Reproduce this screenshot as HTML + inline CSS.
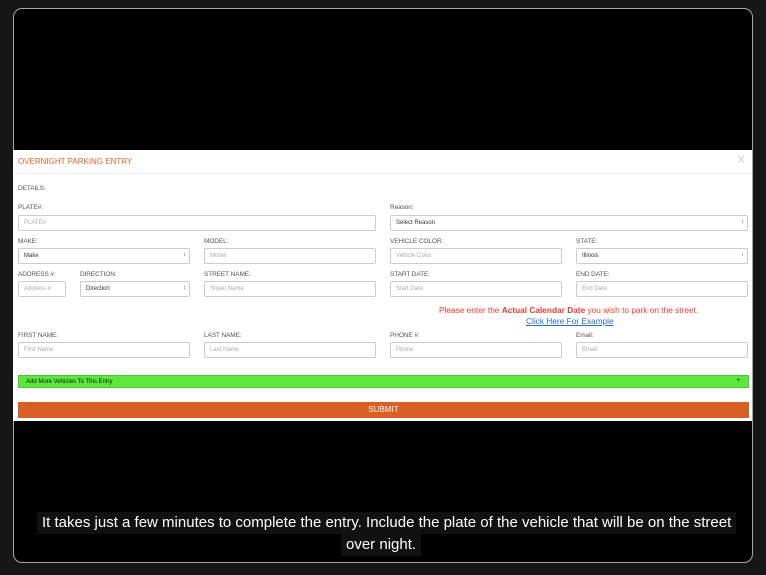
<!DOCTYPE html>
<html><head><meta charset="utf-8"><style>
*{box-sizing:border-box;margin:0;padding:0}
body{width:766px;height:575px;background:#161616;position:relative;overflow:hidden;font-family:"Liberation Sans",sans-serif}
.frame{position:absolute;left:13px;top:8px;width:740px;height:555px;border:1px solid #a8a8a8;border-radius:9px;background:#000;overflow:hidden}
.form{position:absolute;left:13px;top:150px;width:739px;height:271px;background:#fff}
.a{position:absolute}
.lbl{position:absolute;font-size:6.5px;color:#555;letter-spacing:-0.1px}
.in{position:absolute;height:16px;border:1px solid #ccc;border-radius:2px;font-size:6px;color:#aaa;padding:4px 0 0 5px}
.sel{color:#333}
.sel:after{content:"\2195";position:absolute;right:3px;top:3px;font-size:6px;color:#666}
.cap{position:absolute;background:#111;color:#fff;font-size:15px;line-height:22px;padding:0 5px;white-space:nowrap}
</style></head><body>
<div class="frame"></div>
<div class="form">
<div class="a" style="left:5px;top:7px;font-size:8px;color:#e0642c">OVERNIGHT PARKING ENTRY</div>
<div class="a" style="right:7px;top:4px;font-size:11px;color:#ccc">X</div>
<div class="a" style="left:0;top:23px;width:739px;height:1px;background:#eee"></div>
<div class="lbl" style="left:5px;top:35px">DETAILS:</div>
<div class="lbl" style="left:5px;top:54px">PLATE#:</div>
<div class="in" style="left:5px;top:65px;width:358px">PLATE#</div>
<div class="lbl" style="left:377px;top:54px">Reason:</div>
<div class="in sel" style="left:377px;top:65px;width:358px">Select Reason</div>
<div class="lbl" style="left:5px;top:88px">MAKE:</div>
<div class="in sel" style="left:5px;top:98px;width:172px">Make</div>
<div class="lbl" style="left:191px;top:88px">MODEL:</div>
<div class="in" style="left:191px;top:98px;width:172px">Model</div>
<div class="lbl" style="left:377px;top:88px">VEHICLE COLOR:</div>
<div class="in" style="left:377px;top:98px;width:172px">Vehicle Color</div>
<div class="lbl" style="left:563px;top:88px">STATE:</div>
<div class="in sel" style="left:563px;top:98px;width:172px">Illinois</div>
<div class="lbl" style="left:5px;top:121px">ADDRESS #:</div>
<div class="in" style="left:5px;top:131px;width:48px">Address #</div>
<div class="lbl" style="left:67px;top:121px">DIRECTION:</div>
<div class="in sel" style="left:67px;top:131px;width:110px">Direction</div>
<div class="lbl" style="left:191px;top:121px">STREET NAME:</div>
<div class="in" style="left:191px;top:131px;width:172px">Street Name</div>
<div class="lbl" style="left:377px;top:121px">START DATE:</div>
<div class="in" style="left:377px;top:131px;width:172px">Start Date</div>
<div class="lbl" style="left:563px;top:121px">END DATE:</div>
<div class="in" style="left:563px;top:131px;width:172px">End Date</div>
<div class="a" style="left:426px;top:155px;font-size:8.3px;color:#f03a2a;white-space:nowrap">Please enter the <b>Actual Calendar Date</b> you wish to park on the street.</div>
<div class="a" style="left:513px;top:166px;font-size:8.3px;color:#2a6fc0;text-decoration:underline;white-space:nowrap">Click Here For Example</div>
<div class="lbl" style="left:5px;top:182px">FIRST NAME:</div>
<div class="in" style="left:5px;top:192px;width:172px">First Name</div>
<div class="lbl" style="left:191px;top:182px">LAST NAME:</div>
<div class="in" style="left:191px;top:192px;width:172px">Last Name</div>
<div class="lbl" style="left:377px;top:182px">PHONE #:</div>
<div class="in" style="left:377px;top:192px;width:172px">Phone</div>
<div class="lbl" style="left:563px;top:182px">Email:</div>
<div class="in" style="left:563px;top:192px;width:172px">Email</div>
<div class="a" style="left:5px;top:225px;width:731px;height:13px;background:#5ae83c;border:1px solid #4cc832;font-size:6px;color:#111;padding:3px 0 0 7px">Add More Vehicles To This Entry<span style="position:absolute;right:8px;top:2px">+</span></div>
<div class="a" style="left:5px;top:252px;width:731px;height:16px;background:#d86024;color:#fff;font-size:8px;text-align:center;line-height:16px">SUBMIT</div>
</div>
<div class="cap" style="left:37px;top:512px">It takes just a few minutes to complete the entry. Include the plate of the vehicle that will be on the street</div>
<div class="cap" style="left:341px;top:534px">over night.</div>
</body></html>
